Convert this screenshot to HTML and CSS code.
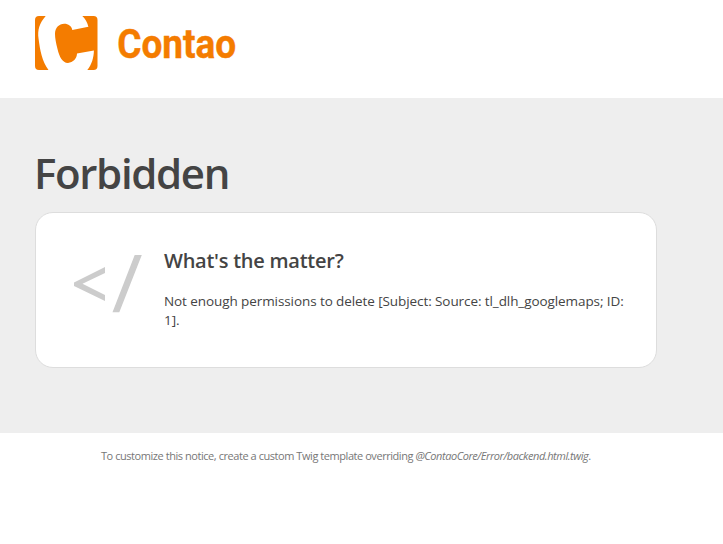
FILE: index.html
```html
<!DOCTYPE html>
<html lang="en">
<head>
<meta charset="utf-8">
<title>Forbidden</title>
<link rel="stylesheet" href="styles.css">
</head>
<body>
<header class="header">
  <svg class="mark" viewBox="0 0 62.5 54" aria-hidden="true">
    <path d="M4 0H10.7C4.5 7 2.3 14 3.6 23C5 34 7 45 13.5 54H4Q0 54 0 50V4Q0 0 4 0Z"/>
    <path d="M47.3 0H58.5Q62.5 0 62.5 4V50Q62.5 54 58.5 54H52.3C56.8 48.5 58.8 41.5 58.9 34.4L42 37.6C42 42.5 38 46.7 33 46.9C27.5 47 24.5 41 22.5 33C21 27 20 22 20 18C20 12 24 7.8 29.2 7.8C33.5 7.8 36.5 10.2 37.3 13.9L53.4 10.7C52.2 6.4 50.4 2.8 47.3 0Z"/>
  </svg>
  <svg class="wordmark" viewBox="0 0 120 54"><text x="-0.8" y="42" textLength="119" lengthAdjust="spacingAndGlyphs">Contao</text></svg>
</header>
<main class="main">
  <h1 class="title">Forbidden</h1>
  <section class="card">
    <svg class="code-icon" viewBox="0 0 68 58" aria-hidden="true">
      <path d="M31 12V18L8.5 28.8L31 40V46L0 31V27.5ZM60.7 0H67.8L45.3 57.3H38.5Z"/>
    </svg>
    <div class="content">
      <h2 class="subtitle">What's the matter?</h2>
      <p class="message"><span class="line">Not enough permissions to delete [Subject: Source: tl_dlh_googlemaps; ID:</span> 1].</p>
    </div>
  </section>
</main>
<footer class="footer">To customize this notice, create a custom Twig template overriding <em>@ContaoCore/Error/backend.html.twig</em>.</footer>
</body>
</html>
```
FILE: styles.css
```css
* { box-sizing: border-box; }
body { margin: 0; background: #fff; color: #444; font-family: "Segoe UI", "Open Sans", "Noto Sans", sans-serif; }
.header { display: flex; align-items: flex-start; gap: 20px; height: 98px; padding: 16px 35px 0; }
.mark { width: 62.5px; height: 54px; fill: #f47c00; }
.wordmark { width: 120px; height: 54px; overflow: visible; fill: #f47c00; stroke: #f47c00; stroke-width: .4px; font: 700 40px Roboto, sans-serif; }
.main { height: 335px; padding: 45px 66px 0 34px; background: #eee; }
.title { margin: 0 0 9px; font-size: 42px; font-weight: 600; line-height: 60px; letter-spacing: -1.35px; white-space: nowrap; }
.card { display: flex; gap: 22px; width: 622px; height: 156px; margin-left: 1px; padding: 34px 32px 0 38px; background: #fff; border: 1px solid #ddd; border-radius: 18px; }
.code-icon { flex: none; width: 68px; height: 58px; margin-top: 8px; fill: #ccc; }
.content { flex: none; width: 464px; }
.subtitle { margin: 0 0 18px; font-size: 20px; font-weight: 600; line-height: 27px; letter-spacing: -.25px; }
.message { margin: 0; font-size: 13.5px; line-height: 19px; letter-spacing: -.085px; }
.line { display: block; white-space: nowrap; }
.footer { padding: 15px 0 0 101px; color: #777; font-size: 11px; line-height: 16px; letter-spacing: -.445px; white-space: nowrap; }
```
